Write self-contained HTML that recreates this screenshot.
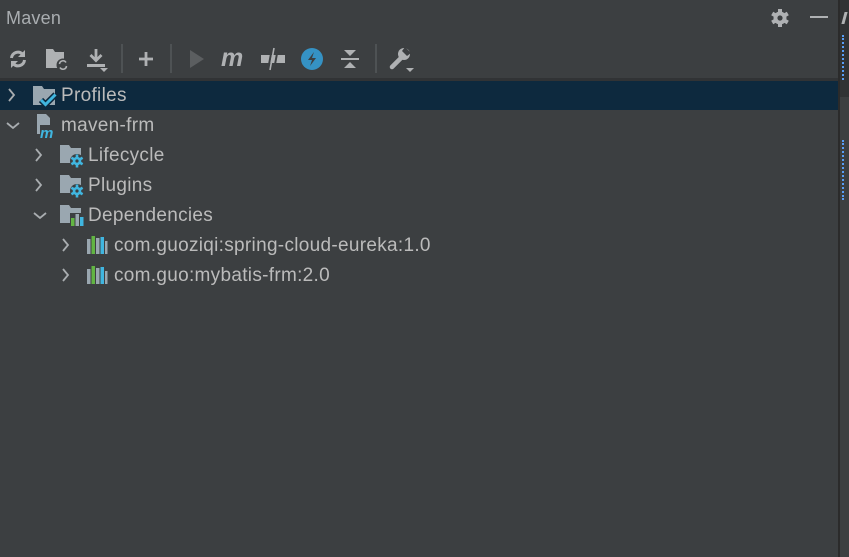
<!DOCTYPE html>
<html><head><style>
body{margin:0;width:849px;height:557px;background:#3c3f41;position:relative;overflow:hidden;font-family:"Liberation Sans",sans-serif;color:#bbbbbb}
.a{position:absolute}
.t{position:absolute;font-size:19px;letter-spacing:0.3px;line-height:30px;white-space:nowrap}
svg{position:absolute;overflow:visible}
</style></head><body>
<div class="t" style="left:6px;top:3px;font-size:18px;letter-spacing:0.2px;color:#a9adb0">Maven</div>
<svg style="left:770px;top:8px" width="20" height="20" viewBox="0 0 20 20"><g fill="#afb1b3"><circle cx="10" cy="10" r="6.5"/><rect x="8" y="1" width="4" height="18"/><rect x="8" y="1" width="4" height="18" transform="rotate(60 10 10)"/><rect x="8" y="1" width="4" height="18" transform="rotate(120 10 10)"/></g><circle cx="10" cy="10" r="2.6" fill="#3c3f41"/></svg>
<div class="a" style="left:810px;top:16px;width:18px;height:2px;background:#afb1b3"></div>
<div class="a" style="left:838px;top:0;width:2px;height:557px;background:#2b2b2b"></div>
<div class="a" style="left:840px;top:0;width:9px;height:97px;background:#313335"></div>
<div class="a" style="left:843px;top:12px;width:3px;height:12px;background:#afb1b3;transform:skewX(-15deg)"></div>
<div class="a" style="left:842px;top:35px;width:2px;height:45px;border-left:2px dotted #589df6"></div>
<div class="a" style="left:842px;top:140px;width:2px;height:60px;border-left:2px dotted #589df6"></div>
<svg style="left:8px;top:49px" width="20" height="20" viewBox="0 0 20 20" fill="none" stroke="#afb1b3" stroke-width="3"><path d="M3.5 9A6.5 6.5 0 0 1 14.5 5"/><path d="M16.5 11A6.5 6.5 0 0 1 5.5 15"/><path d="M17 1v7h-7z" fill="#afb1b3" stroke="none"/><path d="M3 19v-7h7z" fill="#afb1b3" stroke="none"/></svg>
<svg style="left:46px;top:48px" width="26" height="24" viewBox="0 0 26 24"><path d="M0 1h7l2 3h9v16H0z" fill="#afb1b3"/><circle cx="17" cy="17" r="6.5" fill="#3c3f41"/><path d="M13.5 16a3.5 3.5 0 0 1 6.5-1.5M20.5 18a3.5 3.5 0 0 1-6.5 1.5" fill="none" stroke="#afb1b3" stroke-width="1.6"/></svg>
<svg style="left:86px;top:47px" width="24" height="26" viewBox="0 0 24 26"><path d="M10 2v11M4.5 8l5.5 5.5 5.5-5.5" stroke="#afb1b3" stroke-width="2.8" fill="none"/><rect x="1" y="17" width="18" height="3" fill="#afb1b3"/><path d="M14 21h8l-4 4z" fill="#afb1b3"/></svg>
<div class="a" style="left:121px;top:44px;width:2px;height:29px;background:#4e5254"></div>
<svg style="left:137px;top:50px" width="18" height="18" viewBox="0 0 18 18"><path d="M9 2v14M2 9h14" stroke="#afb1b3" stroke-width="2.8"/></svg>
<div class="a" style="left:170px;top:44px;width:2px;height:29px;background:#4e5254"></div>
<svg style="left:188px;top:49px" width="18" height="20" viewBox="0 0 18 20"><path d="M2 1l14 9-14 9z" fill="#5b5e60"/></svg>
<div class="t" style="left:221px;top:43px;font-size:25px;font-weight:bold;font-style:italic;color:#afb1b3;letter-spacing:0">m</div>
<svg style="left:261px;top:48px" width="24" height="22" viewBox="0 0 24 22"><rect x="0" y="7" width="24" height="8" fill="#afb1b3"/><path d="M7 22L11 0M13 22L17 0" stroke="#3c3f41" stroke-width="2"/><path d="M9 22L13 0" stroke="#afb1b3" stroke-width="1.6"/></svg>
<svg style="left:301px;top:48px" width="22" height="22" viewBox="0 0 22 22"><circle cx="11" cy="11" r="11" fill="#3592c4"/><path d="M13 4L7 12h4l-2 6 6-8h-4z" fill="#3c3f41"/></svg>
<svg style="left:340px;top:48px" width="20" height="22" viewBox="0 0 20 22"><path d="M4 2l6 6 6-6zM4 20l6-6 6 6z" fill="#afb1b3"/><rect x="1" y="10" width="18" height="2" fill="#afb1b3"/></svg>
<div class="a" style="left:375px;top:44px;width:2px;height:29px;background:#4e5254"></div>
<svg style="left:389px;top:47px" width="26" height="26" viewBox="0 0 26 26"><path d="M3 20L12 11" stroke="#afb1b3" stroke-width="4.5" stroke-linecap="round"/><circle cx="15" cy="7" r="6" fill="#afb1b3"/><path d="M16 0l6 6-4 3-5-5z" fill="#3c3f41"/><path d="M17 21h8l-4 4z" fill="#afb1b3"/></svg>
<div class="a" style="left:0;top:78px;width:838px;height:3px;background:#313335"></div>
<div class="a" style="left:0;top:81px;width:838px;height:29px;background:#0d293e"></div>
<svg style="left:0;top:0" width="838" height="300" fill="none" stroke="#a9adb0" stroke-width="1.8">
<path d="M9 89l5 6-5 6"/><path d="M7 123l6 5 6-5"/>
<path d="M36 149l5 6-5 6"/><path d="M36 179l5 6-5 6"/><path d="M34 213l6 5 6-5"/>
<path d="M63 239l5 6-5 6"/><path d="M63 269l5 6-5 6"/>
</svg>
<svg style="left:33px;top:85px" width="26" height="24" viewBox="0 0 26 24"><path d="M0 1h9l2 3h11v16H0z" fill="#9aa7b0"/><path d="M8 15l4.5 4.5 10-10" stroke="#0d293e" stroke-width="6" fill="none"/><path d="M8 15l4.5 4.5 10-10" stroke="#40b6e0" stroke-width="3" fill="none"/></svg>
<svg style="left:35px;top:113px" width="22" height="26" viewBox="0 0 22 26"><path d="M2 1h9l4 4v16H2z" fill="#9aa7b0"/><rect x="5" y="12" width="15" height="14" fill="#3c3f41"/><text x="5" y="25" font-family="Liberation Sans" font-size="15" font-weight="bold" font-style="italic" fill="#40b6e0">m</text></svg>
<svg style="left:60px;top:144px" width="26" height="24" viewBox="0 0 26 24"><path d="M0 1h9l2 3h10v15H0z" fill="#9aa7b0"/><circle cx="17" cy="17" r="7" fill="#3c3f41"/><circle cx="17" cy="17" r="4.3" fill="#40b6e0"/><path d="M17 10.5v13M11.4 13.7l11.2 6.6M11.4 20.3l11.2-6.6" stroke="#40b6e0" stroke-width="2.6"/><circle cx="17" cy="17" r="1.6" fill="#3c3f41"/></svg>
<svg style="left:60px;top:174px" width="26" height="24" viewBox="0 0 26 24"><path d="M0 1h9l2 3h10v15H0z" fill="#9aa7b0"/><circle cx="17" cy="17" r="7" fill="#3c3f41"/><circle cx="17" cy="17" r="4.3" fill="#40b6e0"/><path d="M17 10.5v13M11.4 13.7l11.2 6.6M11.4 20.3l11.2-6.6" stroke="#40b6e0" stroke-width="2.6"/><circle cx="17" cy="17" r="1.6" fill="#3c3f41"/></svg>
<svg style="left:60px;top:204px" width="26" height="24" viewBox="0 0 26 24"><path d="M0 1h9l2 3h10v15H0z" fill="#9aa7b0"/><rect x="10" y="9" width="16" height="15" fill="#3c3f41"/><rect x="11" y="14" width="3.5" height="8" fill="#62b543"/><rect x="15.5" y="10" width="3.5" height="12" fill="#9aa7b0"/><rect x="20" y="13" width="3.5" height="9" fill="#40b6e0"/></svg>
<svg style="left:87px;top:235px" width="22" height="21" viewBox="0 0 22 21"><rect x="0" y="4" width="3.5" height="15" fill="#9aa7b0"/><rect x="4.5" y="1" width="3.5" height="18" fill="#62b543"/><rect x="9" y="3" width="3.5" height="16" fill="#9aa7b0"/><rect x="13.5" y="2" width="3.5" height="17" fill="#40b6e0"/><rect x="18" y="6" width="2.5" height="13" fill="#9aa7b0"/></svg>
<svg style="left:87px;top:265px" width="22" height="21" viewBox="0 0 22 21"><rect x="0" y="4" width="3.5" height="15" fill="#9aa7b0"/><rect x="4.5" y="1" width="3.5" height="18" fill="#62b543"/><rect x="9" y="3" width="3.5" height="16" fill="#9aa7b0"/><rect x="13.5" y="2" width="3.5" height="17" fill="#40b6e0"/><rect x="18" y="6" width="2.5" height="13" fill="#9aa7b0"/></svg>
<div class="t" style="left:61px;top:81px">Profiles</div>
<div class="t" style="left:61px;top:111px">maven-frm</div>
<div class="t" style="left:88px;top:141px">Lifecycle</div>
<div class="t" style="left:88px;top:171px">Plugins</div>
<div class="t" style="left:88px;top:201px">Dependencies</div>
<div class="t" style="left:114px;top:231px">com.guoziqi:spring-cloud-eureka:1.0</div>
<div class="t" style="left:114px;top:261px">com.guo:mybatis-frm:2.0</div>
</body></html>
